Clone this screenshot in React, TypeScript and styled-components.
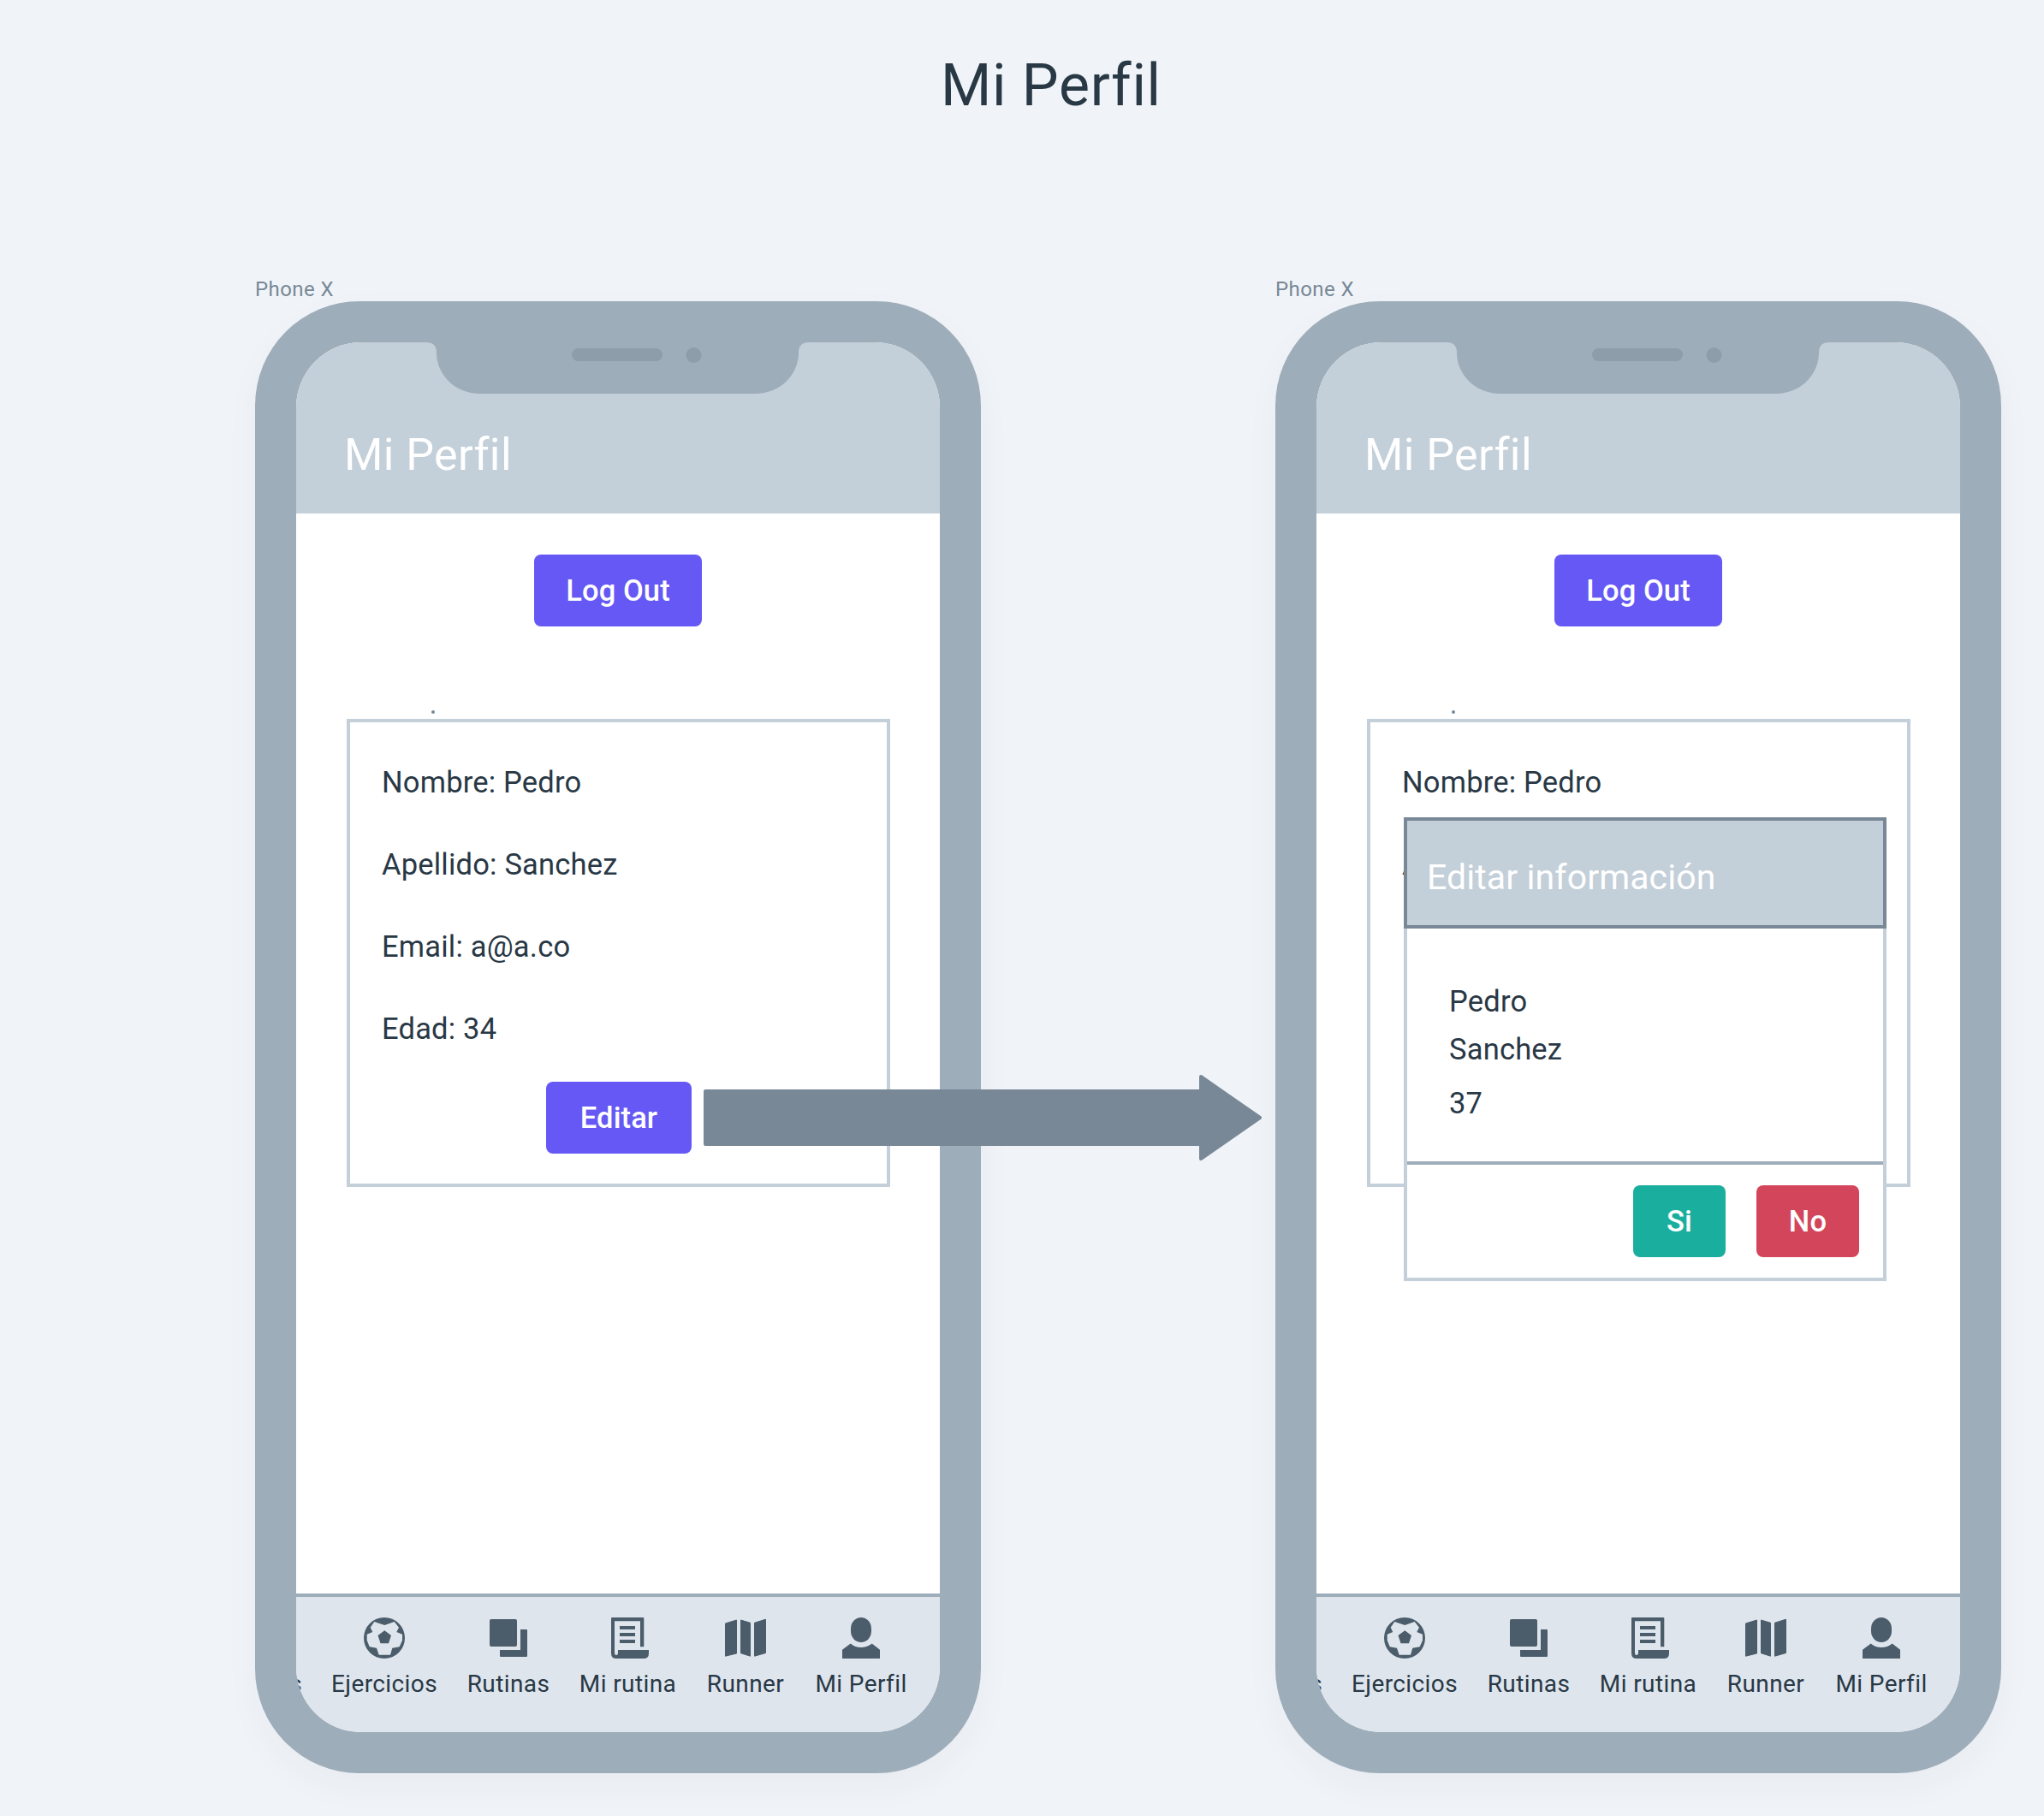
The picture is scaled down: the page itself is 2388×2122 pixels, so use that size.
import React from "react";
import styled, { createGlobalStyle } from "styled-components";

const GlobalStyle = createGlobalStyle`
  html, body { margin: 0; padding: 0; background: #f0f4f8; }
  body { font-family: Roboto, "Liberation Sans", sans-serif; color: #293845; }
`;

const Page = styled.div`
  position: relative;
  width: 2388px;
  height: 2122px;
  overflow: hidden;
  background: #f0f4f8;
`;

const PageHead = styled.header`
  height: 324px;
  padding-top: 60px;
  padding-left: 1099px;
  box-sizing: border-box;
`;

const PageTitle = styled.h1`
  margin: 0;
  font-size: 68px;
  line-height: 80px;
  font-weight: 400;
  letter-spacing: 0.7px;
  color: #293845;
`;

const Devices = styled.div`
  display: flex;
  gap: 344px;
  padding-left: 298px;
`;

const Device = styled.section`
  display: flex;
  flex-direction: column;
  width: 848px;
`;

const DeviceName = styled.div`
  font-size: 24px;
  line-height: 28px;
  letter-spacing: 0.4px;
  color: #788896;
`;

const Phone = styled.div`
  position: relative;
  box-sizing: border-box;
  width: 848px;
  height: 1720px;
  padding: 48px;
  background: #9eadba;
  border-radius: 122px;
  box-shadow: 0 16px 40px rgba(41, 56, 69, 0.04);
`;

const Notch = styled.svg`
  position: absolute;
  left: 200px;
  top: 48px;
  z-index: 2;
`;

const Screen = styled.div`
  display: flex;
  flex-direction: column;
  height: 100%;
  overflow: hidden;
  border-radius: 76px;
  background: #fff;
`;

const AppHeader = styled.div`
  box-sizing: border-box;
  display: flex;
  align-items: flex-end;
  height: 200px;
  padding: 0 0 38px 56px;
  background: #c3cfd9;
`;

const AppTitle = styled.h2`
  margin: 0;
  font-size: 52px;
  line-height: 60px;
  font-weight: 400;
  letter-spacing: 0.4px;
  color: #fff;
`;

const Main = styled.main`
  flex: 1;
  display: flex;
  flex-direction: column;
  padding-top: 48px;
`;

const Button = styled.button<{ $bg?: string; $w: number }>`
  display: block;
  width: ${(p) => p.$w}px;
  height: 84px;
  padding: 0;
  border: 0;
  border-radius: 8px;
  background: ${(p) => p.$bg ?? "#6558f5"};
  color: #fff;
  font-family: inherit;
  font-size: 34.5px;
  font-weight: 500;
  letter-spacing: 0.1px;
  text-align: center;
`;

const LogOut = styled(Button)`
  margin-left: 278px;
`;

const Card = styled.div`
  position: relative;
  box-sizing: border-box;
  width: 635px;
  height: 547px;
  margin: 108px 0 0 59px;
  padding: 22px 0 0 37px;
  border: 4px solid #c3cfd9;
`;

const Speck = styled.span`
  position: absolute;
  left: 95px;
  top: -14px;
  width: 4px;
  height: 4px;
  border-radius: 50%;
  background: #788896;
`;

const InfoRow = styled.p`
  margin: 0;
  font-size: 34.5px;
  line-height: 96px;
  letter-spacing: 0.2px;
  color: #293845;
`;

const EditButton = styled(Button)`
  margin: 14px 0 0 192px;
`;

const Modal = styled.div`
  position: absolute;
  left: 39px;
  top: 111px;
  z-index: 1;
  box-sizing: border-box;
  display: flex;
  flex-direction: column;
  width: 564px;
  height: 542px;
  background: #fff;
  border: 4px solid #c3cfd9;
  border-top: 0;
`;

const ModalHead = styled.div`
  box-sizing: border-box;
  display: flex;
  align-items: center;
  height: 130px;
  margin: 0 -4px;
  padding: 10px 0 0 23px;
  background: #c3cfd9;
  border: 4px solid #788896;
`;

const ModalTitle = styled.h3`
  margin: 0;
  font-size: 41px;
  line-height: 50px;
  font-weight: 400;
  letter-spacing: 0.1px;
  color: #fff;
`;

const ModalBody = styled.div`
  box-sizing: border-box;
  height: 276px;
  padding: 64px 0 0 49px;
  border-bottom: 4px solid #9eadba;
`;

const Field = styled.div<{ $gap?: number }>`
  margin-top: ${(p) => p.$gap ?? 0}px;
  font-size: 34.5px;
  line-height: 42px;
  letter-spacing: 0.2px;
  color: #293845;
`;

const ModalFoot = styled.div`
  display: flex;
  justify-content: flex-end;
  gap: 36px;
  padding: 24px 28px 0 0;
`;

const TabBar = styled.nav`
  box-sizing: border-box;
  display: flex;
  justify-content: flex-end;
  gap: 34px;
  height: 162px;
  padding: 24px 38px 0 0;
  background: #dee5ed;
  border-top: 4px solid #9eadba;
`;

const Tab = styled.div<{ $w: number }>`
  display: flex;
  flex: none;
  flex-direction: column;
  align-items: center;
  width: ${(p) => p.$w}px;
`;

const TabIcon = styled.svg`
  display: block;
  width: 48px;
  height: 48px;
  fill: #4b5c6b;
`;

const TabLabel = styled.span`
  margin-top: 10px;
  font-size: 28px;
  line-height: 40px;
  letter-spacing: 0.4px;
  white-space: nowrap;
  color: #293845;
`;

const ClippedLabel = styled(TabLabel)`
  margin-top: 58px;
  align-self: flex-end;
`;

const Arrow = styled.svg`
  position: absolute;
  left: 822px;
  top: 1254px;
  z-index: 5;
`;

const NotchShape = () => (
  <Notch width="447" height="60" viewBox="0 0 447 60">
    <path d="M0 0H447Q435 0 435 12A50 48 0 0 1 385 60H62A50 48 0 0 1 12 12Q12 0 0 0Z" fill="#9eadba" />
    <rect x="170" y="7" width="106" height="15" rx="7.5" fill="#8d9daa" />
    <circle cx="312.5" cy="15" r="9" fill="#8d9daa" />
  </Notch>
);

const BallIcon = () => (
  <TabIcon viewBox="0 0 48 48">
    <path
      fillRule="evenodd"
      d="M24 0A24 24 0 1 1 24 48A24 24 0 1 1 24 0Z
         M12.3 5L24.3 9L35.7 5L41 11.7L38.3 17L45 19.7L45 26.7L41.7 34.3L33.3 35.7L31 43.7L17.7 43.7L15 35.7L6.7 34.3L3.7 26.7L3.7 19.7L10.3 17L7.7 11.7Z
         M24.3 15.3L32 21L29 30.3L19.5 30.3L16.5 21Z"
    />
  </TabIcon>
);

const CopyIcon = () => (
  <TabIcon viewBox="0 0 48 48">
    <rect x="2" y="2" width="32" height="32" rx="2" />
    <path d="M38 14H45Q46 14 46 15V45Q46 46 45 46H15Q14 46 14 45V38H38Z" />
  </TabIcon>
);

const ScrollIcon = () => (
  <TabIcon viewBox="0 0 48 48">
    <path d="M5 0H41.5Q42.3 0 42.3 1V34.3H38V4.3H8V41Q8 44 10 44Q12 44 12 41V38H48V42Q48 48 42 48H10Q4 48 4 42V1Q4 0 5 0Z" />
    <rect x="14" y="10" width="18" height="4" />
    <rect x="14" y="18" width="18" height="4" />
    <rect x="14" y="26" width="18" height="4" />
  </TabIcon>
);

const MapIcon = () => (
  <TabIcon viewBox="0 0 48 48">
    <g stroke="#4b5c6b" strokeWidth="1" strokeLinejoin="round">
      <path d="M0.5 7L13.5 3V42L0.5 45.2Z" />
      <path d="M18.5 3L29.5 6.3V45.2L18.5 41.7Z" />
      <path d="M34.5 6.3L47.5 2.2V41.5L34.5 45.2Z" />
    </g>
  </TabIcon>
);

const UserIcon = () => (
  <TabIcon viewBox="0 0 48 48">
    <rect x="12" y="0" width="24" height="29" rx="12" ry="13" />
    <path d="M2 48V37.7L11.7 30.5Q17 35 24 35Q31 35 36.7 30.5L46 37.7V48Z" />
  </TabIcon>
);

const Tabs = () => (
  <TabBar>
    <Tab $w={20}>
      <ClippedLabel>s</ClippedLabel>
    </Tab>
    <Tab $w={124}>
      <BallIcon />
      <TabLabel>Ejercicios</TabLabel>
    </Tab>
    <Tab $w={98}>
      <CopyIcon />
      <TabLabel>Rutinas</TabLabel>
    </Tab>
    <Tab $w={113}>
      <ScrollIcon />
      <TabLabel>Mi rutina</TabLabel>
    </Tab>
    <Tab $w={94}>
      <MapIcon />
      <TabLabel>Runner</TabLabel>
    </Tab>
    <Tab $w={108}>
      <UserIcon />
      <TabLabel>Mi Perfil</TabLabel>
    </Tab>
  </TabBar>
);

const PhoneFrame = ({ modal }: { modal?: boolean }) => (
  <Device>
    <DeviceName>Phone X</DeviceName>
    <Phone>
      <NotchShape />
      <Screen>
        <AppHeader>
          <AppTitle>Mi Perfil</AppTitle>
        </AppHeader>
        <Main>
          <LogOut $w={196}>Log Out</LogOut>
          <Card>
            <Speck />
            <InfoRow>Nombre: Pedro</InfoRow>
            <InfoRow>Apellido: Sanchez</InfoRow>
            <InfoRow>Email: a@a.co</InfoRow>
            <InfoRow>Edad: 34</InfoRow>
            <EditButton $w={170}>Editar</EditButton>
            {modal && (
              <Modal>
                <ModalHead>
                  <ModalTitle>Editar información</ModalTitle>
                </ModalHead>
                <ModalBody>
                  <Field>Pedro</Field>
                  <Field $gap={14}>Sanchez</Field>
                  <Field $gap={21}>37</Field>
                </ModalBody>
                <ModalFoot>
                  <Button $w={108} $bg="#1aae9f">Si</Button>
                  <Button $w={120} $bg="#d3455b">No</Button>
                </ModalFoot>
              </Modal>
            )}
          </Card>
        </Main>
        <Tabs />
      </Screen>
    </Phone>
  </Device>
);

export default function App() {
  return (
    <Page>
      <GlobalStyle />
      <PageHead>
        <PageTitle>Mi Perfil</PageTitle>
      </PageHead>
      <Devices>
        <PhoneFrame />
        <PhoneFrame modal />
      </Devices>
      <Arrow width="654" height="104" viewBox="0 0 654 104">
        <path
          d="M2 21H581V4L650 52L581 100V83H2Z"
          fill="#788896"
          stroke="#788896"
          strokeWidth="4"
          strokeLinejoin="round"
        />
      </Arrow>
    </Page>
  );
}
